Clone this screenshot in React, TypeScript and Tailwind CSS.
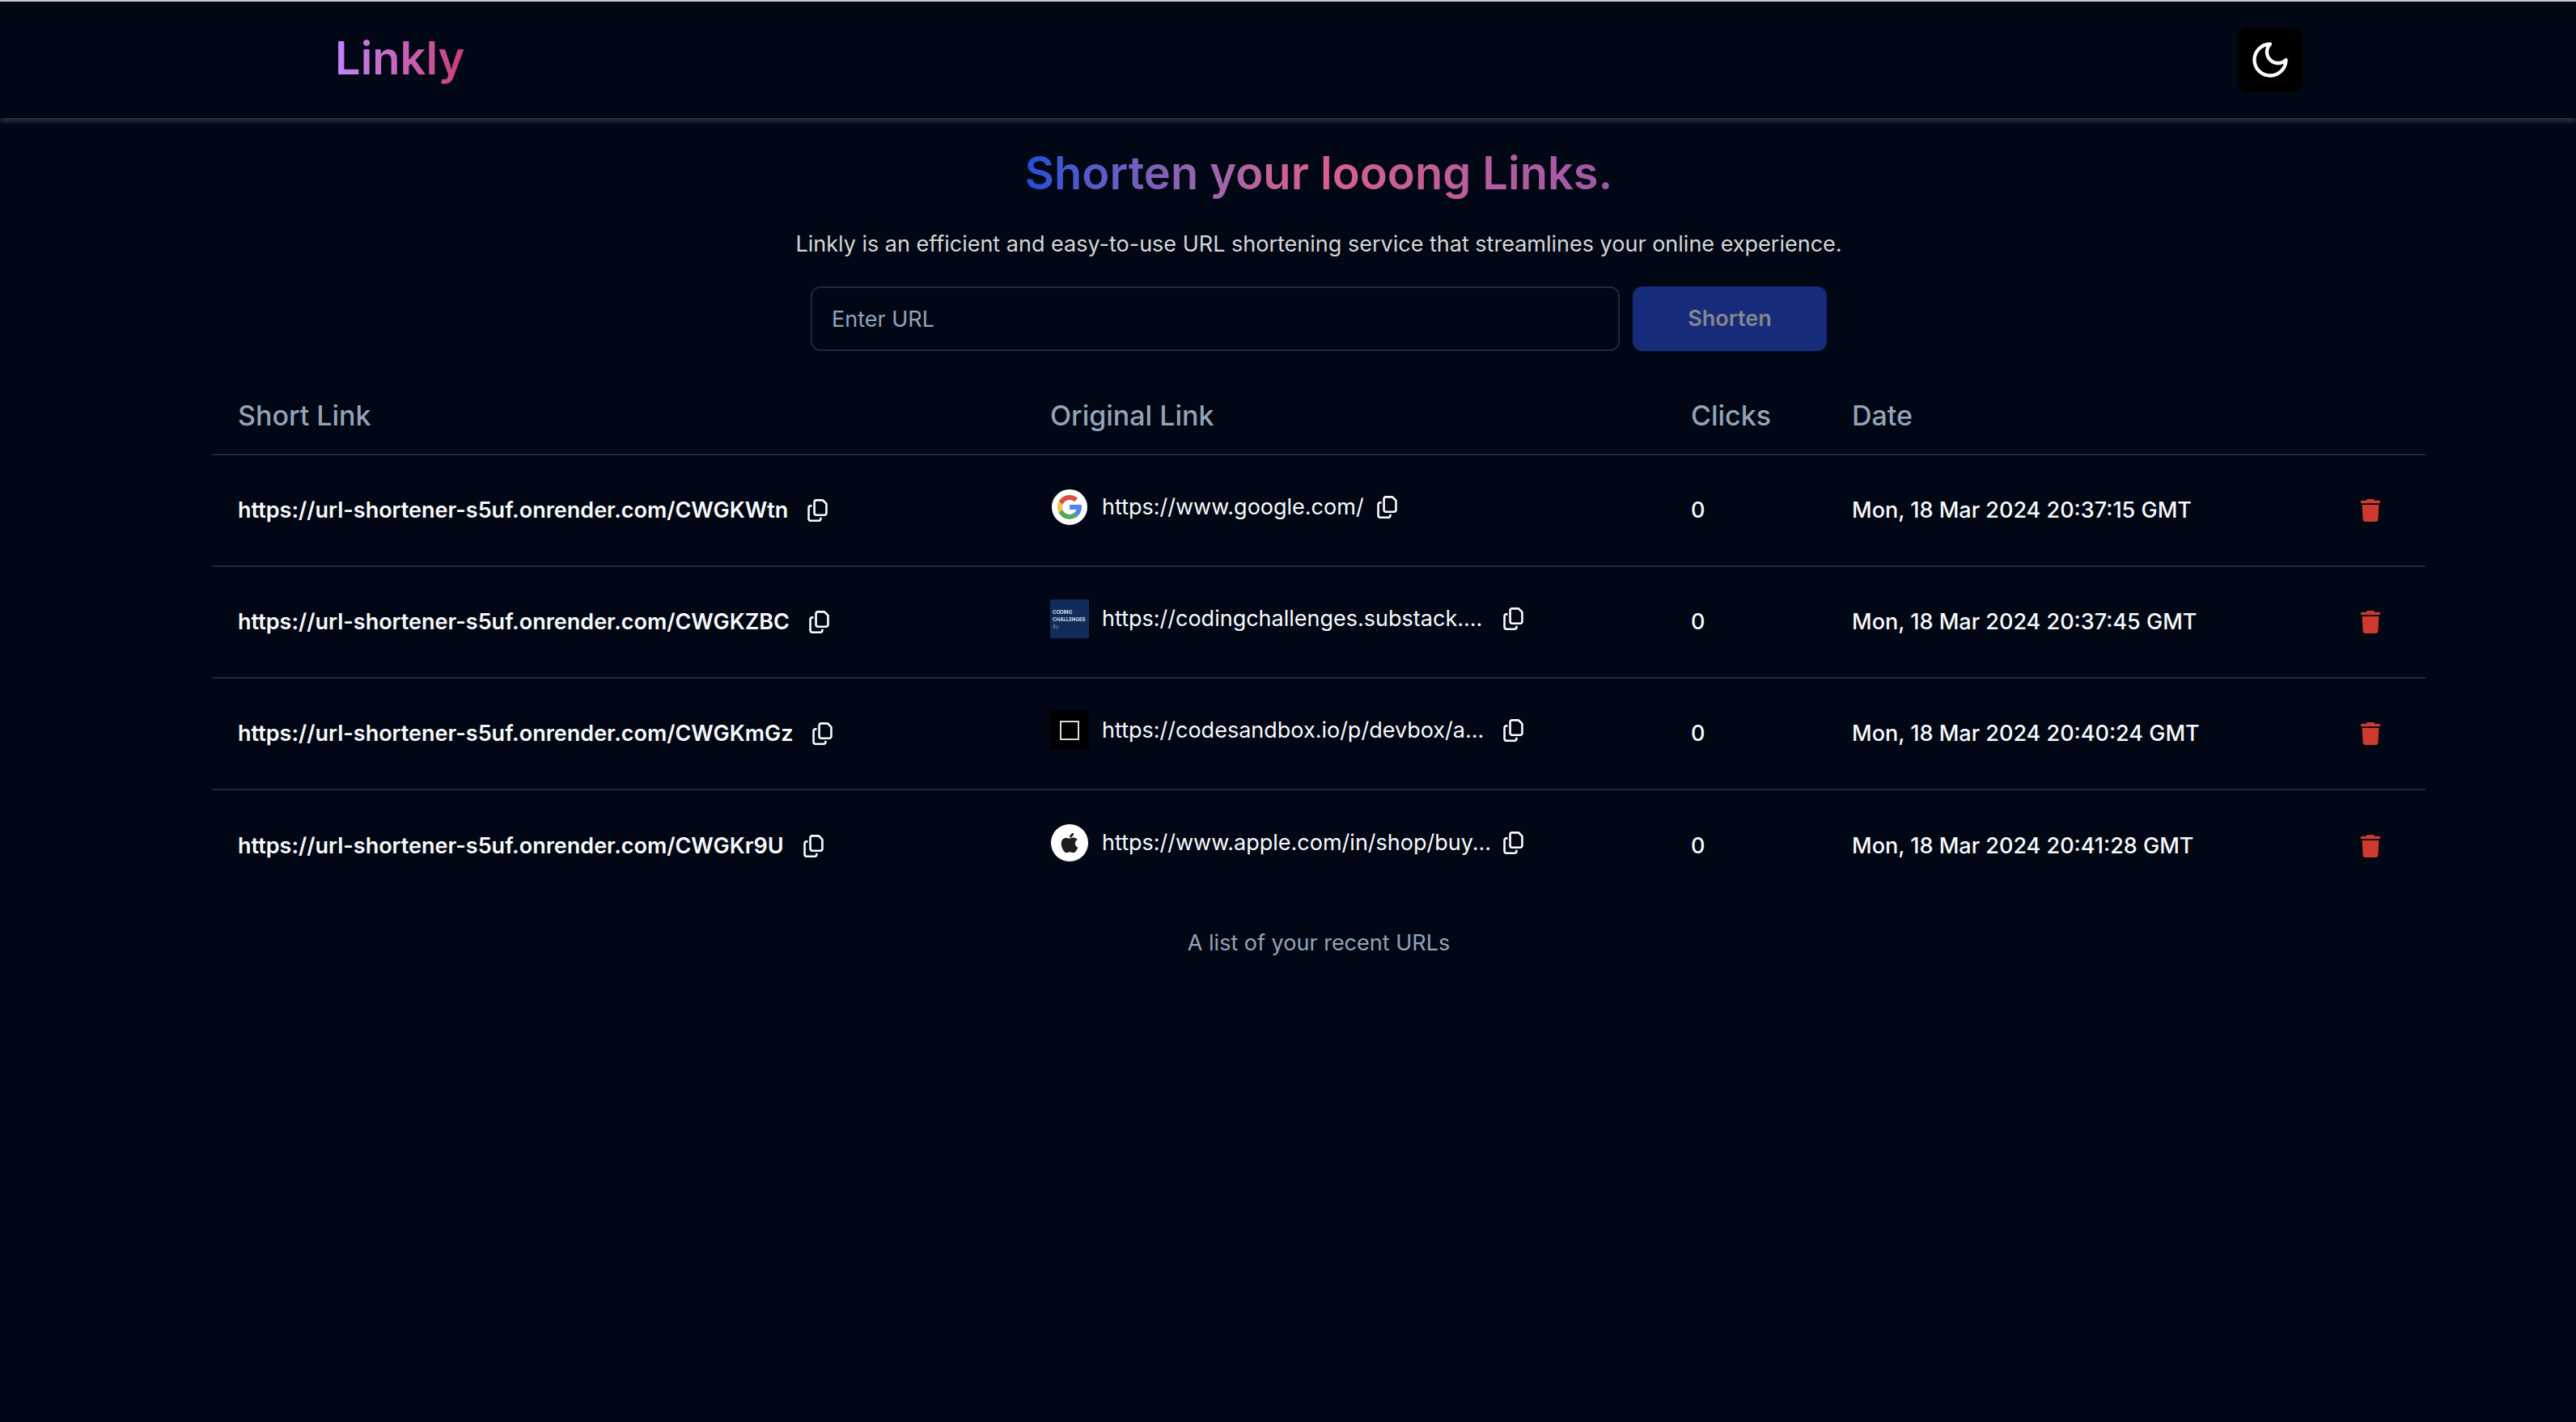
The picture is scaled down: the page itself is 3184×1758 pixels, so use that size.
import React from 'react';
import { FaTrash, FaRegCopy, FaApple } from 'react-icons/fa6';

type Site = 'google' | 'coding' | 'sandbox' | 'apple';

type Row = { short: string; original: string; site: Site; clicks: number; date: string };

const rows: Row[] = [
  { short: 'CWGKWtn', original: 'https://www.google.com/', site: 'google', clicks: 0, date: 'Mon, 18 Mar 2024 20:37:15 GMT' },
  { short: 'CWGKZBC', original: 'https://codingchallenges.substack....', site: 'coding', clicks: 0, date: 'Mon, 18 Mar 2024 20:37:45 GMT' },
  { short: 'CWGKmGz', original: 'https://codesandbox.io/p/devbox/a...', site: 'sandbox', clicks: 0, date: 'Mon, 18 Mar 2024 20:40:24 GMT' },
  { short: 'CWGKr9U', original: 'https://www.apple.com/in/shop/buy...', site: 'apple', clicks: 0, date: 'Mon, 18 Mar 2024 20:41:28 GMT' },
];

function MoonIcon() {
  return (
    <svg viewBox="0 0 24 24" className="size-13" fill="none" stroke="currentColor" strokeWidth="2" strokeLinecap="round" strokeLinejoin="round" aria-hidden="true">
      <path d="M12 3a6 6 0 0 0 9 9 9 9 0 1 1-9-9Z" />
    </svg>
  );
}

function GoogleIcon() {
  return (
    <svg viewBox="0 0 48 48" className="size-9" aria-hidden="true">
      <path fill="#5383ec" d="M43.611 20.083H24v8h11.303a12.04 12.04 0 0 1-4.087 5.571l6.19 5.238C36.971 39.205 44 34 44 24c0-1.341-.138-2.65-.389-3.917z" />
      <path fill="#58a55c" d="M24 44c5.166 0 9.86-1.977 13.409-5.192l-6.19-5.238A11.91 11.91 0 0 1 24 36c-5.202 0-9.619-3.317-11.283-7.946l-6.522 5.025C9.505 39.556 16.227 44 24 44z" />
      <path fill="#f1bf42" d="M12.717 28.054A12 12 0 0 1 12 24c0-1.4.24-2.746.683-3.998l-6.377-5.311A19.9 19.9 0 0 0 4 24c0 3.268.79 6.35 2.195 9.079z" />
      <path fill="#d85140" d="m6.306 14.691 6.571 4.819C14.655 15.108 18.961 12 24 12c3.059 0 5.842 1.154 7.961 3.039l5.657-5.657C34.046 6.053 29.268 4 24 4 16.318 4 9.656 8.337 6.306 14.691z" />
    </svg>
  );
}

function Favicon({ site }: { site: Site }) {
  if (site === 'google')
    return (
      <span className="flex size-12 shrink-0 items-center justify-center rounded-full border-2 border-[#010714] bg-white">
        <GoogleIcon />
      </span>
    );
  if (site === 'coding')
    return (
      <span className="flex size-12 shrink-0 flex-col justify-center bg-[#112b5b] pl-[3px] text-[6px] leading-[9px] font-bold text-[#d5dcea]">
        <span>CODING</span>
        <span>CHALLENGES</span>
        <span className="font-normal text-[#8193b5]">By</span>
      </span>
    );
  if (site === 'sandbox')
    return (
      <span className="flex size-12 shrink-0 items-center justify-center bg-black">
        <span className="size-6 border-2 border-[#d8d8d8]" />
      </span>
    );
  return (
    <span className="flex size-12 shrink-0 items-center justify-center rounded-full border border-[#010714] bg-white text-[#1d1d1f]">
      <FaApple className="size-7" />
    </span>
  );
}

function CopyButton({ label }: { label: string }) {
  return (
    <button type="button" aria-label={label} className="shrink-0">
      <FaRegCopy className="h-7 w-[25px]" />
    </button>
  );
}

export default function App() {
  return (
    <div className="min-h-screen border-t-2 border-[#c9cecf] bg-[#010714] font-[Inter,sans-serif] text-[#f8fafc]">
      <header className="pl-19 shadow-[0_4px_6px_0_#ffffff30]">
        <div className="mx-auto flex h-36 max-w-[2432px] items-center justify-between">
          <a href="#" className="mb-1 bg-linear-to-r from-[#c084fc] to-[#c93b76] bg-clip-text text-[56px] leading-[72px] font-semibold text-transparent">
            Linkly
          </a>
          <button type="button" aria-label="Toggle theme" className="flex size-20 items-center justify-center rounded-xl bg-black text-white">
            <MoonIcon />
          </button>
        </div>
      </header>

      <div className="pl-19">
        <main className="mx-auto flex max-w-[2736px] flex-col">
          <h1 className="mt-8 self-center bg-linear-to-r from-[#1d4ed8] via-[#db5f8b] to-[#9d58a8] bg-clip-text text-[56px] leading-[72px] font-semibold text-transparent">
            Shorten your looong Links.
          </h1>
          <p className="mt-8 text-center text-[27px] leading-10 text-[#d6d6d6]">
            Linkly is an efficient and easy-to-use URL shortening service that streamlines your online experience.
          </p>
          <form className="mx-auto mt-8 flex w-full max-w-[1256px] gap-4" onSubmit={(e) => e.preventDefault()}>
            <input
              type="url"
              aria-label="Enter URL"
              placeholder="Enter URL"
              className="h-20 min-w-0 flex-1 rounded-xl border-2 border-[#1e293b] bg-transparent px-6 text-[27px] placeholder:text-[#94a3b8]"
            />
            <button type="submit" disabled className="h-20 w-60 rounded-xl bg-[#162b7a] text-[27px] font-semibold text-[#85878c]">
              Shorten
            </button>
          </form>

          <table className="mt-8 w-full table-fixed caption-bottom text-left text-[27px] leading-10">
            <caption className="mt-8 text-[#94a3b8]">A list of your recent URLs</caption>
            <colgroup>
              <col className="w-[1004px]" />
              <col className="w-[792px]" />
              <col className="w-[199px]" />
              <col />
              <col className="w-[130px]" />
            </colgroup>
            <thead>
              <tr className="h-24 border-b-2 border-[#1e293b] text-[34px] text-[#94a3b8]">
                <th className="px-8 font-medium">Short Link</th>
                <th className="px-8 font-medium">Original Link</th>
                <th className="px-8 font-medium">Clicks</th>
                <th className="px-8 font-medium">Date</th>
                <th className="px-8" aria-label="Actions" />
              </tr>
            </thead>
            <tbody>
              {rows.map((r) => (
                <tr key={r.short} className="h-[138px] border-b-2 border-[#1e293b] last:border-0">
                  <td className="px-8 font-semibold">
                    <div className="flex items-center gap-6">
                      <a href="#">https://url-shortener-s5uf.onrender.com/{r.short}</a>
                      <CopyButton label="Copy short link" />
                    </div>
                  </td>
                  <td className="px-8 pb-2">
                    <div className="flex items-center gap-4">
                      <Favicon site={r.site} />
                      <a href="#" className={r.site === 'google' ? '' : 'w-[480px] whitespace-nowrap'}>{r.original}</a>
                      <CopyButton label="Copy original link" />
                    </div>
                  </td>
                  <td className="px-8 font-medium">{r.clicks}</td>
                  <td className="px-8 font-medium">{r.date}</td>
                  <td className="px-8">
                    <button type="button" aria-label="Delete link" className="ml-4 block text-[#cc3a30]">
                      <FaTrash className="size-7" />
                    </button>
                  </td>
                </tr>
              ))}
            </tbody>
          </table>
        </main>
      </div>
    </div>
  );
}
